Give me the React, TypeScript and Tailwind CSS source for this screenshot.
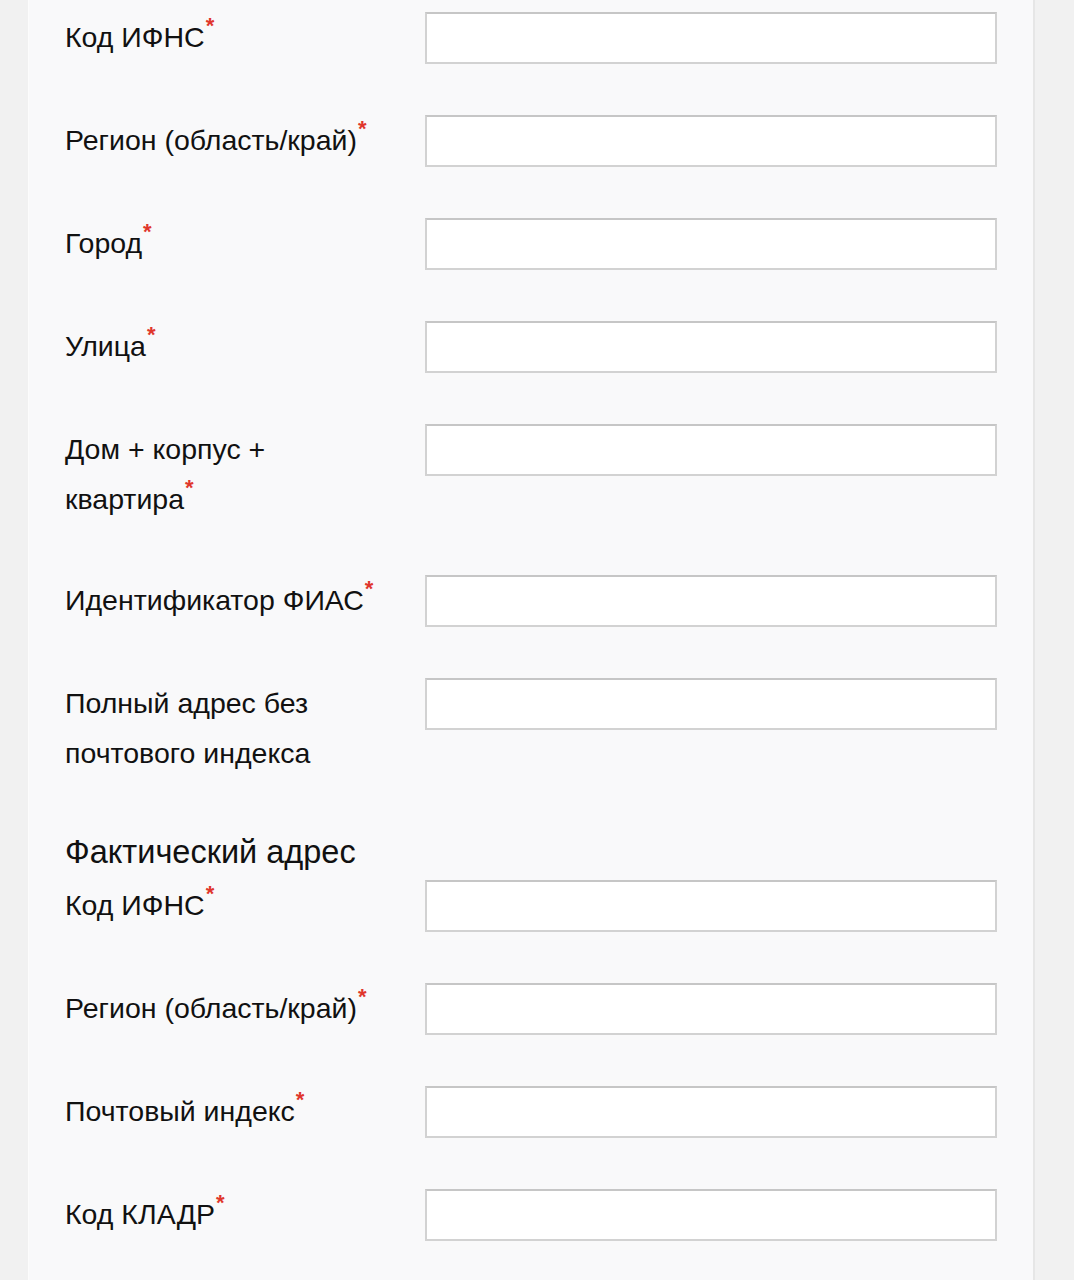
import React from "react";

type Field = { label: string; required?: boolean };

const legal: Field[] = [
  { label: "Код ИФНС", required: true },
  { label: "Регион (область/край)", required: true },
  { label: "Город", required: true },
  { label: "Улица", required: true },
  { label: "Дом + корпус + квартира", required: true },
  { label: "Идентификатор ФИАС", required: true },
  { label: "Полный адрес без почтового индекса" },
];

const actual: Field[] = [
  { label: "Код ИФНС", required: true },
  { label: "Регион (область/край)", required: true },
  { label: "Почтовый индекс", required: true },
  { label: "Код КЛАДР", required: true },
];

const Row: React.FC<{ field: Field }> = ({ field }) => (
  <div className="flex items-start mb-[51px]">
    <label className="w-[360px] pr-[40px] text-[28.5px] leading-[50px] text-[#111]">
      {field.label}
      {field.required && (
        <span className="inline-block align-top text-[22px] leading-[22px] font-bold mt-[3px] ml-[1px] text-[#e0362c]">
          *
        </span>
      )}
    </label>
    <input
      type="text"
      className="w-[572px] h-[52px] bg-white border-2 border-[#d2d2d2] border-t-[#c6c6c6] outline-none"
    />
  </div>
);

export default function App() {
  return (
    <div
      className="min-h-[1280px] bg-[#f1f1f1]"
      style={{ fontFamily: '"Liberation Sans", Arial, sans-serif' }}
    >
      <div className="ml-[28px] w-[1007px] min-h-[1280px] bg-[#f9f9fa] border-l border-[#fcfcfc] border-r-2 border-r-[#e6e6e6] pl-[36px] pt-[12px]">
        {legal.map((f) => (
          <Row key={"l" + f.label} field={f} />
        ))}
        <h3 className="text-[32.5px] leading-[46px] h-[46px] text-[#111] mb-[5px]">
          Фактический адрес
        </h3>
        {actual.map((f) => (
          <Row key={"a" + f.label} field={f} />
        ))}
      </div>
    </div>
  );
}
